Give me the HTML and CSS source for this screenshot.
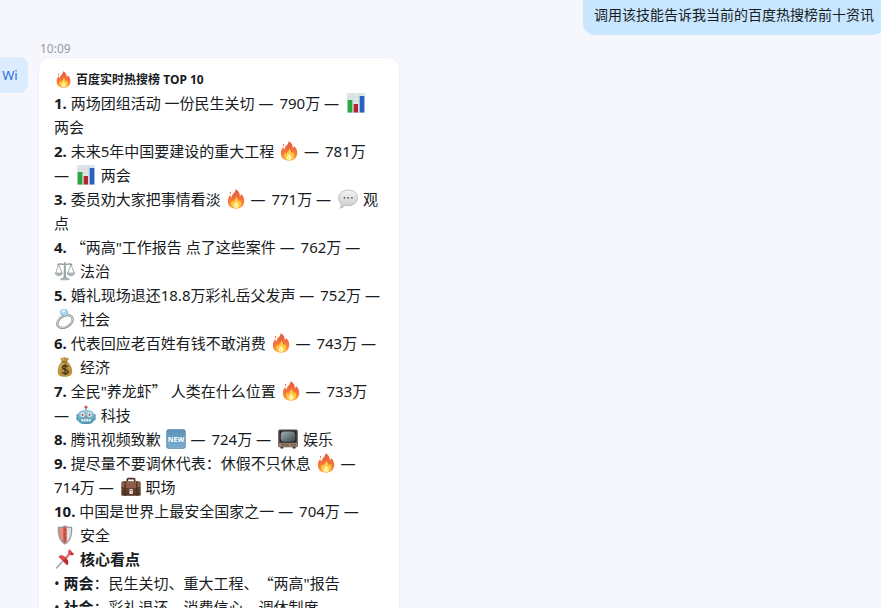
FILE: index.html
```html
<!doctype html>
<html lang="zh-CN">
  <head>
    <meta charset="UTF-8" />
    <meta name="viewport" content="width=device-width, initial-scale=1.0" />
    <title>百度实时热搜榜</title>
    <link rel="stylesheet" href="styles.css" />
  </head>
  <body>
    <!-- 图标 -->
    <svg class="icon-defs" aria-hidden="true">
      <defs>
        <linearGradient id="g-fire" x1="0" y1="0" x2="0" y2="1">
          <stop offset="0" stop-color="#e2573d" />
          <stop offset="0.6" stop-color="#f9763a" />
          <stop offset="1" stop-color="#ff9b36" />
        </linearGradient>
        <linearGradient id="g-bubble" x1="0" y1="0" x2="0" y2="1">
          <stop offset="0" stop-color="#f4f4f4" />
          <stop offset="1" stop-color="#c9c9cb" />
        </linearGradient>
        <linearGradient id="g-robot" x1="0" y1="0" x2="0" y2="1">
          <stop offset="0" stop-color="#a3cfdf" />
          <stop offset="1" stop-color="#4b93b0" />
        </linearGradient>
        <linearGradient id="g-new" x1="0" y1="0" x2="0" y2="1">
          <stop offset="0" stop-color="#5e93b8" />
          <stop offset="1" stop-color="#79add0" />
        </linearGradient>
        <linearGradient id="g-case" x1="0" y1="0" x2="0" y2="1">
          <stop offset="0" stop-color="#865741" />
          <stop offset="1" stop-color="#50301f" />
        </linearGradient>
        <linearGradient id="g-tv" x1="0" y1="0" x2="1" y2="1">
          <stop offset="0" stop-color="#9fb0b2" />
          <stop offset="1" stop-color="#3c4a4e" />
        </linearGradient>
      </defs>

      <symbol id="fire" viewBox="0 0 22 20">
        <path fill="url(#g-fire)" d="M10.5 0.3C14.2 2.2 15 5 14.8 7.2c.8-.4 1.2-1.2 1.3-2.2 2.400 2.300 3.300 4.800 3.100 7.600-.3 4.400-3.400 7-8 7-4.900 0-8.200-2.700-8.300-7.100C2.800 9.800 4 7.700 5.200 6c.2 1.300.6 2.100 1.400 2.600C6.300 5.400 10.800 4 10.500.3z" />
        <path fill="#ef6745" d="M5.400 2.600c.9.9.8 1.900 0 2.800-.7-.9-.7-1.900 0-2.800z" />
        <path fill="#ffc83d" d="M11.600 7.300c.3 2.400 1.900 3.200 2.100 5.200.6-.3 1-.9 1.100-1.700 1.200 1.400 1.700 2.700 1.500 4.200-.3 2.700-2.300 4.300-5.100 4.300-3 0-5.100-1.700-5.200-4.300 0-1.400.5-2.600 1.400-3.700.2.900.6 1.500 1.300 1.700-.1-2.300 2.600-3 2.900-5.700z" />
        <path fill="#fff0a6" d="M11.300 12c.2 1.800 2.400 2.500 2.400 4.600 0 1.600-1.100 2.600-2.500 2.600s-2.600-1-2.600-2.500c0-1.900 2.300-2.800 2.700-4.700z" />
      </symbol>

      <symbol id="chart" viewBox="0 0 22 20">
        <path fill="#dfe6ea" d="M2 0h18v20H2z" />
        <path stroke="#c2ccd3" stroke-width=".5" d="M2 4h18M2 8h18M2 12h18M2 16h18M8 0v20M14 0v20" />
        <path fill="#27a83b" d="M2.700 7h4.600v12.500H2.700z" />
        <path fill="#b3262b" d="M8.700 11h4.300v8.500H8.700z" />
        <path fill="#2860c4" d="M14.700 3h4.600v16.500h-4.600z" />
      </symbol>

      <symbol id="speech" viewBox="0 0 22 20">
        <path fill="url(#g-bubble)" stroke="#a8a8ab" stroke-width=".7" d="M11.300 1c5.400 0 9.200 3.300 9.200 7.800 0 4.600-3.900 7.900-9.200 7.900-1.200 0-2.300-.2-3.300-.5-1.200 1.500-2.800 2.500-4.900 2.900.9-1.200 1.400-2.400 1.300-4C2.700 13.700 1.700 11.400 1.700 8.900 1.700 4.300 6 1 11.300 1z" />
        <g fill="#55555a">
          <circle cx="7.500" cy="8.800" r=".9" />
          <circle cx="11.200" cy="8.800" r=".9" />
          <circle cx="14.900" cy="8.800" r=".9" />
        </g>
      </symbol>

      <symbol id="scale" viewBox="0 0 22 20">
        <g fill="none" stroke="#8b959b" stroke-width=".8">
          <path d="M4.500 3.500 1.800 12M4.500 3.500 8 12M17 3.500 13.800 12M17 3.500 20.200 12" />
          <path stroke-width="1.300" d="M3.500 3.600C7 2 8.500 4 10.800 3.200 13 4 15 2 18.200 3.600" />
        </g>
        <path fill="#9da6ab" d="M10 1.600a.9.9 0 0 1 1.700 0l.5 15.400H9.500z" />
        <path fill="#b3bbbf" stroke="#7d878c" stroke-width=".5" d="M1.200 12h7.200c-.5 2-1.800 2.700-3.600 2.700S1.700 14 1.200 12zM13.200 12h7.400c-.5 2-1.900 2.700-3.700 2.700s-3.200-.7-3.700-2.700zM6.500 18.800c0-1.400 2-2.100 4.400-2.100s4.400.7 4.400 2.100z" />
      </symbol>

      <symbol id="ring" viewBox="0 0 22 20">
        <ellipse cx="11" cy="12.500" rx="8.300" ry="5.600" transform="rotate(-32 11 12.500)" fill="none" stroke="#8f9693" stroke-width="2.400" />
        <ellipse cx="10.800" cy="12.200" rx="8.300" ry="5.600" transform="rotate(-32 10.800 12.200)" fill="none" stroke="#d4d8d6" stroke-width="1" />
        <path fill="#a7d4e8" stroke="#6fa9c4" stroke-width=".5" d="m6 2.300 2.300-2 4 .3 2 2.600-2.600 4.500L7.200 6z" />
        <path fill="#e2f4fb" d="m8.300 1 3.500.3-1.500 2.500-2.800-.7z" />
      </symbol>

      <symbol id="money" viewBox="0 0 22 20">
        <path fill="#b99341" d="M8 4.600C6.900 3.300 6.300 2 6.500.8c1.500.8 2.500-.6 4-.5 1.500 0 2.500 1.200 4.200.6 0 1.300-.7 2.600-1.800 3.700 3 2 5.300 6.100 5.300 9.700 0 4-2.500 5.500-7.300 5.500-4.900 0-7.200-1.600-7.200-5.400C3.700 10.600 5.500 6.500 8 4.600z" />
        <path fill="#d6b767" d="M8.600 6c-2 2-3.200 5-3.300 7.600 1.200-1.600 2-5 4.700-7.500zM8 1.600c.3 1 .8 1.800 1.400 2.500l.8-2.700z" />
        <path fill="none" stroke="#7b5a1e" stroke-width="1" d="M7.700 5h5.500" />
        <path fill="none" stroke="#4a3b19" stroke-width="1.500" d="M13.800 10c-.5-1-1.500-1.400-2.700-1.400-1.500 0-2.600.7-2.600 2 0 2.900 5.600 1.200 5.600 4 0 1.400-1.300 2.100-2.900 2.100-1.500 0-2.700-.6-3-1.800M11.200 7.300v10.800" />
      </symbol>

      <symbol id="robot" viewBox="0 0 22 20">
        <circle cx="11" cy="2.200" r="1.600" fill="#cf6058" />
        <path fill="#71aabd" d="M10.200 3.500h1.600v2.500h-1.600z" />
        <rect x="1.500" y="9" width="3" height="6.500" rx="1.300" fill="#4b86a0" />
        <rect x="17.500" y="9" width="3" height="6.500" rx="1.300" fill="#4b86a0" />
        <path fill="url(#g-robot)" d="M2.500 12c0-5 3-7.300 8.500-7.300s8.500 2.300 8.500 7.300c0 5.200-2 7-8.500 7s-8.500-1.800-8.500-7z" />
        <circle cx="7.500" cy="9.800" r="2.200" fill="#e5f2f5" />
        <circle cx="14.500" cy="9.800" r="2.200" fill="#e5f2f5" />
        <circle cx="7.500" cy="9.800" r="1.100" fill="#b05348" />
        <circle cx="14.500" cy="9.800" r="1.100" fill="#b05348" />
        <path fill="#c7614f" d="m11 10.800 1 1.900h-2z" />
        <rect x="6.300" y="14" width="9.400" height="2.500" rx="1.200" fill="#e8f3f5" />
        <path stroke="#4b86a0" stroke-width=".6" d="M8.600 14v2.500M11 14v2.500M13.400 14v2.500" />
      </symbol>

      <symbol id="tv" viewBox="0 0 22 20">
        <rect x="1.200" y=".6" width="19.600" height="17.600" rx="1.500" fill="#5d4b42" />
        <rect x="2" y="14.200" width="18" height="3.500" fill="#a2887a" />
        <rect x="2.600" y="1.600" width="16.800" height="12" rx="2.500" fill="#26292a" />
        <rect x="3.800" y="2.500" width="14.400" height="10.200" rx="3.500" fill="url(#g-tv)" />
        <path fill="#3b302a" d="M3.500 18h2.800v1.600H3.500zM15.700 18h2.800v1.600h-2.800z" />
        <circle cx="15" cy="16" r=".8" fill="#3d302b" />
        <circle cx="17.800" cy="16" r=".8" fill="#3d302b" />
        <path stroke="#695348" stroke-width=".7" d="M4 15.300h8M4 16.600h8" />
      </symbol>

      <symbol id="briefcase" viewBox="0 0 22 20">
        <path fill="none" stroke="#4a342a" stroke-width="1.600" d="M7.300 5V2.600q0-1 1-1h5.400q1 0 1 1V5" />
        <rect x="1.300" y="4.200" width="19.400" height="14.500" rx="1.500" fill="url(#g-case)" />
        <path fill="#8c5f49" d="M2 4.800h18v5.600q-9 3-18 0z" />
        <path fill="none" stroke="#432819" stroke-width=".7" d="M1.800 10.400q9.200 3.200 18.400 0" />
        <path fill="#4a2d20" d="M4.600 4.200h1.200v14.500H4.600zM16.200 4.200h1.200v14.500h-1.200z" />
        <rect x="9.400" y="12" width="3.400" height="5" rx=".6" fill="#e6ddd0" />
        <circle cx="11" cy="13.400" r=".7" fill="#5b3a29" />
      </symbol>

      <symbol id="shield" viewBox="0 0 22 20">
        <path fill="#949b9e" d="M11 .3c2 1.100 4.400 1.600 7.200 1.500.5 8-1.200 14.500-7.200 18C5 16.300 3.300 9.800 3.800 1.800 6.600 1.900 9 1.400 11 .3z" />
        <path fill="#dfe2e2" d="M11 1.800c1.800.9 3.700 1.300 6 1.300.3 6.700-1.200 12-6 15.200z" />
        <path fill="#e58d80" d="M11 1.800C9.200 2.700 7.300 3.100 5 3.100c-.3 6.700 1.200 12 6 15.200z" />
        <path fill="#d25549" d="M9.300 2.600 11 1.800l1.700.8v14.200L11 18.300l-1.700-1.500z" />
        <g fill="#8f3a33">
          <circle cx="11" cy="5" r=".7" />
          <circle cx="11" cy="9" r=".7" />
          <circle cx="11" cy="13" r=".7" />
        </g>
      </symbol>

      <symbol id="pin" viewBox="0 0 22 20">
        <path stroke="#9ba0a4" stroke-width="1.300" stroke-linecap="round" d="M9.500 11.500 2.500 19" />
        <path fill="#b82c2f" d="M4.600 7.500c2-1.500 4.300-1.200 6.600.7l3.500-3.600C14.200 3 14.300 1.500 15.500.6l4.600 4.600c-1 1.100-2.500 1.200-4 .6l-3.400 3.800c2 2.400 2.200 4.800.5 6.900z" />
        <path fill="#e3484a" d="M4.600 7.500c2-1.500 4.300-1.200 6.600.7l3.500-3.600C14.200 3 14.300 1.500 15.500.6l2.600 2.600-8.900 8.700z" />
        <path fill="#f28f8b" d="m11.700 8.300 3.300-3.400.7.600-3.300 3.500z" />
      </symbol>
    </svg>

    <main class="chat">
      <div class="message-user">
        <p class="bubble-user">调用该技能告诉我当前的百度热搜榜前十资讯</p>
      </div>

      <article class="message-bot">
        <time class="time" datetime="10:09">10:09</time>
        <div class="avatar">Wi</div>
        <div class="bubble-bot">
          <h2 class="title"><svg class="emoji emoji-small"><use href="#fire" /></svg> 百度实时热搜榜 TOP 10</h2>
          <ol class="hot-list">
            <li><b>1.</b> 两场团组活动 一份民生关切 <span class="dash">—</span> 790万 <span class="dash">—</span> <svg class="emoji"><use href="#chart" /></svg> 两会</li>
            <li><b>2.</b> 未来5年中国要建设的重大工程 <svg class="emoji"><use href="#fire" /></svg> <span class="dash">—</span> 781万 <span class="dash">—</span> <svg class="emoji"><use href="#chart" /></svg> 两会</li>
            <li><b>3.</b> 委员劝大家把事情看淡 <svg class="emoji"><use href="#fire" /></svg> <span class="dash">—</span> 771万 <span class="dash">—</span> <svg class="emoji"><use href="#speech" /></svg> 观点</li>
            <li><b>4.</b> <span class="quote">“</span>两高"工作报告 点了这些案件 <span class="dash">—</span> 762万 <span class="dash">—</span> <svg class="emoji"><use href="#scale" /></svg> 法治</li>
            <li><b>5.</b> 婚礼现场退还18.8万彩礼岳父发声 <span class="dash">—</span> 752万 <span class="dash">—</span> <svg class="emoji"><use href="#ring" /></svg> 社会</li>
            <li><b>6.</b> 代表回应老百姓有钱不敢消费 <svg class="emoji"><use href="#fire" /></svg> <span class="dash">—</span> 743万 <span class="dash">—</span> <svg class="emoji"><use href="#money" /></svg> 经济</li>
            <li><b>7.</b> 全民"养龙虾<span class="quote">”</span> 人类在什么位置 <svg class="emoji"><use href="#fire" /></svg> <span class="dash">—</span> 733万 <span class="dash">—</span> <svg class="emoji"><use href="#robot" /></svg> 科技</li>
            <li>
              <b>8.</b> 腾讯视频致歉
              <svg class="emoji" viewBox="0 0 22 20">
                <rect x="1.300" y=".3" width="19.400" height="19.400" rx="2.600" fill="#557f9d" />
                <rect x="2" y="1" width="18" height="18" rx="2" fill="url(#g-new)" />
                <text class="new-text" x="11" y="12.500" text-anchor="middle">NEW</text>
              </svg>
              <span class="dash">—</span> 724万 <span class="dash">—</span> <svg class="emoji"><use href="#tv" /></svg> 娱乐
            </li>
            <li><b>9.</b> 提尽量不要调休代表：休假不只休息 <svg class="emoji"><use href="#fire" /></svg> <span class="dash">—</span> 714万 <span class="dash">—</span> <svg class="emoji"><use href="#briefcase" /></svg> 职场</li>
            <li><b>10.</b> 中国是世界上最安全国家之一 <span class="dash">—</span> 704万 <span class="dash">—</span> <svg class="emoji"><use href="#shield" /></svg> 安全</li>
          </ol>
          <h3 class="subtitle"><svg class="emoji"><use href="#pin" /></svg> 核心看点</h3>
          <p>• <b>两会</b>：民生关切、重大工程、<span class="quote">“</span>两高"报告</p>
          <p>• <b>社会</b>：彩礼退还、消费信心、调休制度</p>
        </div>
      </article>
    </main>
  </body>
</html>
```
FILE: styles.css
```css
* {
  box-sizing: border-box;
  margin: 0;
  padding: 0;
}

body {
  font-family: "Noto Sans", "Noto Sans CJK SC", sans-serif;
  font-size: 15px;
  line-height: 24px;
  text-spacing-trim: space-all;
  color: #171b22;
  background-color: #f5f7fc;
}

.icon-defs {
  display: block;
  width: 0;
  height: 0;
}

/* 聊天区域 */
.chat {
  height: 100vh;
  overflow: hidden;
}

/* 用户消息 */
.message-user {
  display: flex;
  justify-content: flex-end;
  margin-top: -8px;
  margin-right: -4px;
}

.bubble-user {
  padding: 12px 11px 9px;
  font-size: 14px;
  line-height: 22px;
  border-radius: 12px;
  background-color: #c9e6ff;
}

/* 机器人消息 */
.message-bot {
  display: grid;
  grid-template-columns: 36px minmax(0, 362px);
  column-gap: 10px;
  margin-top: 6px;
  margin-left: -8px;
}

.time {
  grid-column: 2;
  padding-left: 2px;
  font-size: 12px;
  line-height: 16px;
  color: #959ca6;
}

.avatar {
  height: 36px;
  font-size: 13px;
  line-height: 36px;
  text-align: center;
  color: #2b73d9;
  border-radius: 8px;
  background-color: #dcecff;
}

.bubble-bot {
  padding: 11px 15px;
  border: 1px solid #eff2f8;
  border-radius: 12px;
  background-color: #fff;
}

.title {
  font-size: 12px;
  line-height: 22px;
}

.subtitle {
  font-size: 15px;
  line-height: 24px;
}

.hot-list {
  list-style: none;
}

.dash {
  margin-right: 2px;
}

/* 全角引号 */
.quote {
  font-family: "Noto Sans CJK SC", sans-serif;
  line-height: 1;
}

/* 表情 */
.emoji {
  width: 22px;
  height: 20px;
  vertical-align: -4px;
}

.emoji-small {
  width: 19px;
  height: 17px;
}

.new-text {
  font-size: 7px;
  font-weight: bold;
  fill: #fff;
}
```
